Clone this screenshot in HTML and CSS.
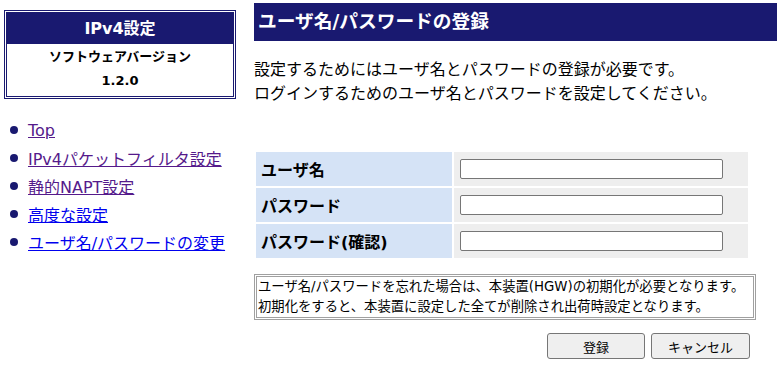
FILE: index.html
```html
<!DOCTYPE html>
<html lang="ja">
<head>
<meta charset="utf-8">
<title>ユーザ名/パスワードの登録</title>
<link rel="stylesheet" href="styles.css">
</head>
<body>
<div class="page">
  <aside class="side">
    <div class="infobox">
      <div class="infobox-title">IPv4設定</div>
      <div class="infobox-body">
        <div>ソフトウェアバージョン</div>
        <div>1.2.0</div>
      </div>
    </div>
    <ul class="nav">
      <li><a class="visited" href="#">Top</a></li>
      <li><a class="visited" href="#">IPv4パケットフィルタ設定</a></li>
      <li><a class="visited" href="#">静的NAPT設定</a></li>
      <li><a href="#">高度な設定</a></li>
      <li><a href="#">ユーザ名/パスワードの変更</a></li>
    </ul>
  </aside>
  <main class="main">
    <h1 class="heading">ユーザ名/パスワードの登録</h1>
    <p class="intro">設定するためにはユーザ名とパスワードの登録が必要です。<br>ログインするためのユーザ名とパスワードを設定してください。</p>
    <table class="form">
      <tr>
        <th>ユーザ名</th>
        <td><input type="text" class="field"></td>
      </tr>
      <tr>
        <th>パスワード</th>
        <td><input type="password" class="field"></td>
      </tr>
      <tr>
        <th>パスワード(確認)</th>
        <td><input type="password" class="field"></td>
      </tr>
    </table>
    <table class="notice">
      <tr>
        <td>ユーザ名/パスワードを忘れた場合は、本装置(HGW)の初期化が必要となります。<br>初期化をすると、本装置に設定した全てが削除され出荷時設定となります。</td>
      </tr>
    </table>
    <div class="actions">
      <button type="button" class="btn btn-ok">登録</button>
      <button type="button" class="btn btn-cancel">キャンセル</button>
    </div>
  </main>
</div>
</body>
</html>
```
FILE: styles.css
```css
html, body {
  margin: 0;
  padding: 0;
  background: #ffffff;
}

body {
  font-family: "DejaVu Sans", "Noto Sans CJK JP", sans-serif;
  color: #000000;
  font-size: 16px;
}

.page {
  display: flex;
  padding-left: 4px;
  gap: 18px;
}

.side {
  width: 232px;
  flex: none;
  padding-top: 10px;
}

.infobox {
  border: 3px double #191970;
  background: #ffffff;
}

.infobox-title {
  background: #191970;
  color: #ffffff;
  font-weight: bold;
  font-size: 16px;
  height: 31px;
  line-height: 31px;
  text-align: center;
}

.infobox-body {
  text-align: center;
  font-weight: bold;
  font-size: 13px;
  line-height: 24px;
  padding: 1px 0 3px;
}

.nav {
  list-style: none;
  margin: 17px 0 0;
  padding: 0;
}

.nav li {
  display: flex;
  align-items: center;
  height: 28px;
  font-size: 16px;
}

.nav li::before {
  content: "";
  width: 8px;
  height: 8px;
  border-radius: 50%;
  background: #191970;
  margin-left: 6px;
  margin-right: 10px;
  flex: none;
}

.nav a {
  color: #0000ee;
  text-decoration: underline;
}

.nav a.visited {
  color: #551a8b;
}

.main {
  flex: 1;
  padding-top: 3px;
}

.heading {
  margin: 0;
  background: #191970;
  color: #ffffff;
  font-size: 18.72px;
  font-weight: bold;
  height: 38px;
  line-height: 38px;
  padding-left: 4px;
}

.intro {
  margin: 17px 0 0;
  font-size: 16px;
  line-height: 24px;
}

.form {
  margin-top: 44px;
  border-collapse: separate;
  border-spacing: 2px;
  width: 496px;
}

.form th,
.form td {
  height: 34px;
  padding: 0;
}

.form th {
  width: 191px;
  background: #d5e3f6;
  text-align: left;
  font-size: 16px;
  font-weight: bold;
  padding-left: 5px;
}

.form td {
  background: #eeeeee;
  padding-left: 6px;
}

.field {
  display: block;
  box-sizing: border-box;
  width: 263px;
  height: 20px;
  margin: 0;
  border: 1px solid #767676;
  border-radius: 2px;
  background: #ffffff;
  padding: 1px 2px;
}

.notice {
  margin-top: 14px;
  border: 1px solid #a0a0a0;
  border-spacing: 1px;
  width: 502px;
}

.notice td {
  border: 1px solid #a0a0a0;
  padding: 0 1px;
  font-size: 13.33px;
  line-height: 20px;
}

.actions {
  width: 496px;
  display: flex;
  justify-content: flex-end;
  gap: 6px;
  margin-top: 13px;
}

.btn {
  font-family: "DejaVu Sans", "Noto Sans CJK JP", sans-serif;
  font-size: 13px;
  height: 26px;
  background: #efefef;
  border: 1px solid #767676;
  border-radius: 3px;
  color: #000000;
  padding: 0;
}

.btn-ok {
  width: 98px;
}

.btn-cancel {
  width: 99px;
}
```
